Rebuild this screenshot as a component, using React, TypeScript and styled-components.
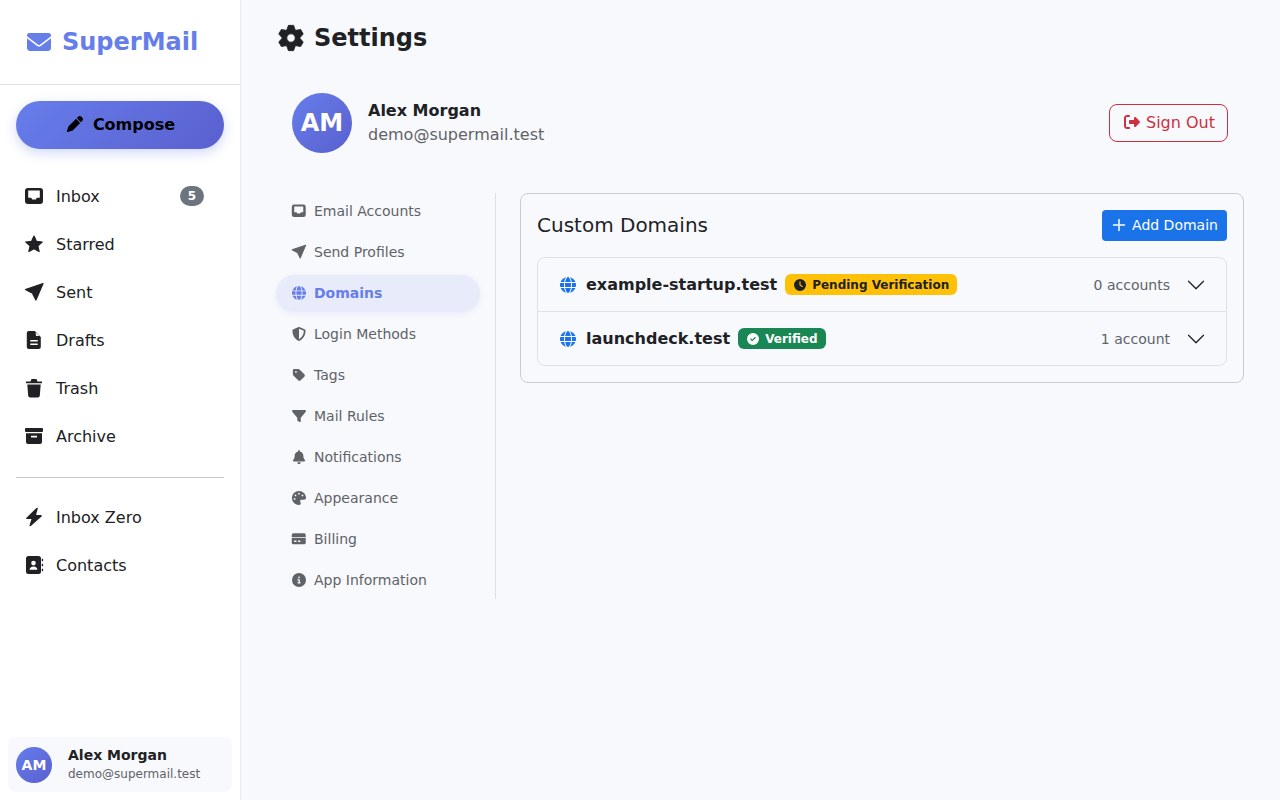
import React from "react";
import styled, { createGlobalStyle } from "styled-components";
import {
  FaEnvelope,
  FaPen,
  FaRightFromBracket,
  FaGlobe,
  FaShieldHalved,
  FaTag,
  FaFilter,
  FaBell,
  FaPalette,
  FaCircleInfo,
  FaClock,
  FaCircleCheck,
} from "react-icons/fa6";

const GlobalStyle = createGlobalStyle`
  * { box-sizing: border-box; }
  html, body { margin: 0; height: 100%; }
  body {
    font-family: "DejaVu Sans", sans-serif;
    background: #f8f9fc;
    color: #202124;
    font-size: 16px;
    overflow: hidden;
  }
`;

const Layout = styled.div`
  display: flex;
  height: 100vh;
`;

const Sidebar = styled.aside`
  width: 241px;
  flex-shrink: 0;
  background: #fff;
  border-right: 1px solid #e9ecef;
  display: flex;
  flex-direction: column;
`;

const Brand = styled.div`
  height: 85px;
  padding-left: 27px;
  border-bottom: 1px solid #e0e0e0;
  display: flex;
  align-items: center;
  gap: 11px;
  color: #667eea;
  font-size: 24px;
  font-weight: 700;
`;

const ComposeButton = styled.button`
  margin: 16px 16px 23px;
  height: 48px;
  padding: 0 0 2px 2px;
  border: none;
  border-radius: 24px;
  background: linear-gradient(135deg, #667eea, #5a5fcf);
  box-shadow: 0 4px 12px rgba(102, 126, 234, 0.3);
  color: #000;
  font-family: inherit;
  font-size: 16px;
  font-weight: 700;
  display: flex;
  align-items: center;
  justify-content: center;
  gap: 10px;
`;

const Glyph = styled.svg`
  width: 20px;
  height: 20px;
  flex-shrink: 0;
  fill: currentColor;
`;

const NavItem = styled.div`
  height: 48px;
  padding: 0 36px 0 24px;
  display: flex;
  align-items: center;
  gap: 12px;
  color: #202124;
  font-size: 16px;
`;

const NavLabel = styled.span`
  flex: 1;
`;

const CountBadge = styled.span`
  width: 24px;
  height: 20px;
  border-radius: 10px;
  background: #6c757d;
  color: #fff;
  font-size: 12px;
  font-weight: 700;
  display: flex;
  align-items: center;
  justify-content: center;
`;

const SideDivider = styled.hr`
  margin: 17px 16px 15px;
  border: none;
  border-top: 1px solid #ccc;
`;

const UserCard = styled.div`
  margin: auto 8px 8px;
  height: 55px;
  padding: 0 8px;
  border-radius: 8px;
  background: #f8f9fc;
  display: flex;
  align-items: center;
  gap: 16px;
`;

const Avatar = styled.div<{ $size: number; $font: number }>`
  width: ${(p) => p.$size}px;
  height: ${(p) => p.$size}px;
  font-size: ${(p) => p.$font}px;
  flex-shrink: 0;
  border-radius: 50%;
  background: linear-gradient(135deg, #667eea, #5a5fcf);
  color: #fff;
  font-weight: 700;
  display: flex;
  align-items: center;
  justify-content: center;
`;

const UserName = styled.div`
  font-size: 14px;
  font-weight: 700;
  line-height: 20px;
`;

const UserMail = styled.div`
  font-size: 12px;
  line-height: 19px;
  color: #5f6368;
`;

const Main = styled.main`
  flex: 1;
  min-width: 0;
  padding: 17px 36px 0 35px;
`;

const PageTitle = styled.h1`
  margin: 0 0 36px;
  padding: 2px 0 0 1px;
  height: 40px;
  font-size: 24px;
  font-weight: 700;
  display: flex;
  align-items: center;
  gap: 9px;
  ${Glyph} {
    width: 28px;
    height: 28px;
  }
`;

const ProfileRow = styled.div`
  height: 60px;
  padding: 0 16px;
  margin-bottom: 40px;
  display: flex;
  align-items: center;
  gap: 16px;
`;

const ProfileText = styled.div`
  flex: 1;
`;

const ProfileName = styled.div`
  font-weight: 700;
  line-height: 24px;
`;

const ProfileMail = styled.div`
  color: #5f6368;
  line-height: 24px;
`;

const SignOut = styled.button`
  height: 38px;
  width: 119px;
  border: 1px solid #cf3040;
  border-radius: 8px;
  background: transparent;
  color: #cf3040;
  font-family: inherit;
  font-size: 16px;
  display: flex;
  align-items: center;
  justify-content: center;
  gap: 6px;
  padding: 0 0 2px 2px;
`;

const SettingsBody = styled.div`
  display: flex;
  align-items: flex-start;
  gap: 24px;
`;

const SettingsNav = styled.nav`
  width: 220px;
  flex-shrink: 0;
  padding: 0 15px 0 0;
  border-right: 1px solid #dee2e6;
  display: flex;
  flex-direction: column;
  gap: 4px;
`;

const SettingsItem = styled.div<{ $active?: boolean }>`
  height: 37px;
  padding: 0 16px 2px;
  border-radius: 19px;
  display: flex;
  align-items: center;
  gap: 8px;
  font-size: 14px;
  font-weight: ${(p) => (p.$active ? 700 : 400)};
  color: ${(p) => (p.$active ? "#667eea" : "#5f6368")};
  background: ${(p) => (p.$active ? "#e8ebfa" : "transparent")};
  box-shadow: ${(p) => (p.$active ? "0 2px 6px rgba(102, 126, 234, 0.1)" : "none")};
  svg {
    width: 14px;
    flex-shrink: 0;
  }
  ${Glyph} {
    width: 15.5px;
    height: 15.5px;
    margin: 0 -0.75px;
  }
`;

const Card = styled.section`
  flex: 1;
  min-width: 0;
  padding: 16px;
  border: 1px solid #ccc;
  border-radius: 8px;
`;

const CardHeader = styled.div`
  height: 31px;
  margin-bottom: 16px;
  display: flex;
  align-items: center;
  justify-content: space-between;
`;

const CardTitle = styled.h2`
  margin: 0 0 2px;
  font-size: 20px;
  font-weight: 400;
`;

const AddButton = styled.button`
  width: 125px;
  height: 31px;
  border: none;
  border-radius: 4px;
  background: #1a73e8;
  color: #fff;
  font-family: inherit;
  font-size: 14px;
  padding: 0 0 2px;
  display: flex;
  align-items: center;
  justify-content: center;
  gap: 5px;
`;

const DomainList = styled.div`
  border: 1px solid #dee2e6;
  border-radius: 8px;
`;

const DomainRow = styled.div`
  height: 53px;
  padding: 0 20px 0 22px;
  display: flex;
  align-items: center;
  & + & {
    height: 54px;
    border-top: 1px solid #dee2e6;
  }
`;

const GlobeWrap = styled.span`
  display: flex;
  margin-right: 10px;
  color: #1a73e8;
  font-size: 16px;
`;

const DomainName = styled.span`
  font-weight: 700;
  margin-right: 8px;
`;

const StatusBadge = styled.span<{ $tone: "pending" | "verified" }>`
  height: 21px;
  padding: 0 8px 0 9px;
  border-radius: 6px;
  font-size: 12px;
  font-weight: 700;
  display: flex;
  align-items: center;
  gap: 6px;
  background: ${(p) => (p.$tone === "pending" ? "#ffc107" : "#198754")};
  color: ${(p) => (p.$tone === "pending" ? "#202124" : "#fff")};
`;

const AccountCount = styled.span`
  margin-left: auto;
  margin-right: 16px;
  font-size: 14px;
  color: #5f6368;
`;

const Chevron = () => (
  <svg width="20" height="20" viewBox="0 0 16 16" fill="#202124">
    <path
      fillRule="evenodd"
      d="M1.646 4.646a.5.5 0 0 1 .708 0L8 10.293l5.646-5.647a.5.5 0 0 1 .708.708l-6 6a.5.5 0 0 1-.708 0l-6-6a.5.5 0 0 1 0-.708z"
    />
  </svg>
);

const Plus = () => (
  <svg width="16" height="16" viewBox="0 0 16 16" fill="#fff" stroke="#fff" strokeWidth="0.5">
    <path
      fillRule="evenodd"
      d="M8 2a.5.5 0 0 1 .5.5v5h5a.5.5 0 0 1 0 1h-5v5a.5.5 0 0 1-1 0v-5h-5a.5.5 0 0 1 0-1h5v-5A.5.5 0 0 1 8 2z"
    />
  </svg>
);

// the glyphs below are drawn on a 20px box, the stock solid set is too sharp for them
const InboxIcon = () => (
  <Glyph viewBox="0 0 20 20">
    <path
      fillRule="evenodd"
      d="M4 2h12a3 3 0 0 1 3 3v10a3 3 0 0 1-3 3H4a3 3 0 0 1-3-3V5a3 3 0 0 1 3-3zM4.2 4.6v7.2h3l1 1.8h3.6l1-1.8h3V4.6z"
    />
  </Glyph>
);

const StarIcon = () => (
  <Glyph viewBox="0 0 20 20">
    <path
      d="M10 2l2.4 5.3 5.8.7-4.3 3.9 1.2 5.7-5.1-2.9-5.1 2.9 1.2-5.7L1.800 8l5.800-.7z"
      stroke="currentColor"
      strokeWidth="1.2"
      strokeLinejoin="round"
    />
  </Glyph>
);

const PlaneIcon = () => (
  <Glyph viewBox="0 0 20 20">
    <path
      d="M19 1.500L1.500 7.500l6 3.200 5.500-4.700-4.300 5.700 3.200 6.300z"
      stroke="currentColor"
      strokeWidth="1.3"
      strokeLinejoin="round"
    />
  </Glyph>
);

const FileIcon = () => (
  <Glyph viewBox="0 0 20 20">
    <path
      fillRule="evenodd"
      d="M4.800 1h6l6 6v10a2 2 0 0 1-2 2H4.800a2 2 0 0 1-2-2V3a2 2 0 0 1 2-2zM11.800 2.500V5a1 1 0 0 0 1 1h2.500zM6.300 10v1.600h7.400V10zM6.300 13.500v1.600h7.400v-1.600z"
    />
  </Glyph>
);

const TrashIcon = () => (
  <Glyph viewBox="0 0 20 20">
    <path d="M7.500 1h5l1 2.500H18v1.700H2V3.500h4.500z" />
    <path d="M3.300 6.500h13.400l-.9 11.200a2 2 0 0 1-2 1.800H6.200a2 2 0 0 1-2-1.800z" />
  </Glyph>
);

const ArchiveIcon = () => (
  <Glyph viewBox="0 0 20 20">
    <rect x="1" y="2" width="18" height="4" rx="1" />
    <path
      fillRule="evenodd"
      d="M2 7.300h16V16a2 2 0 0 1-2 2H4a2 2 0 0 1-2-2zM7 9.800v1.800h6V9.800z"
    />
  </Glyph>
);

const BoltIcon = () => (
  <Glyph viewBox="0 0 20 20">
    <path
      d="M13 1.500L3 11.200h5.600L6.300 18.500 17 8.800h-6z"
      stroke="currentColor"
      strokeWidth="1.6"
      strokeLinejoin="round"
    />
  </Glyph>
);

const ContactsIcon = () => (
  <Glyph viewBox="0 0 20 20">
    <path
      fillRule="evenodd"
      d="M4.500 1h10a2.500 2.500 0 0 1 2.500 2.500v13a2.500 2.500 0 0 1-2.500 2.500h-10A2.500 2.500 0 0 1 2 16.500v-13A2.500 2.500 0 0 1 4.500 1zM9.500 5.800a2.300 2.300 0 1 0 0 4.600 2.300 2.300 0 0 0 0-4.600zM5.600 14.800h7.800c0-2-1.500-3.300-3.900-3.300s-3.900 1.300-3.900 3.300z"
    />
    <rect x="17.800" y="3.800" width="1.300" height="2.400" />
    <rect x="17.800" y="8.800" width="1.300" height="2.400" />
    <rect x="17.800" y="13.800" width="1.300" height="2.400" />
  </Glyph>
);

const CardIcon = () => (
  <Glyph viewBox="0 0 20 20">
    <path
      fillRule="evenodd"
      d="M3 3h14a2 2 0 0 1 2 2v10a2 2 0 0 1-2 2H3a2 2 0 0 1-2-2V5a2 2 0 0 1 2-2zM1 7.600v1h18v-1zM4 12.300v1.800h3v-1.800zM9 12.300v1.800h3v-1.800z"
    />
  </Glyph>
);

// six toothed gear, teeth sit on top and bottom
const gearPath = () => {
  const points: string[] = [];
  for (let k = 0; k < 6; k++) {
    const mid = (Math.PI / 3) * k - Math.PI / 2;
    [
      [6.5, -0.48],
      [9.2, -0.2],
      [9.2, 0.2],
      [6.5, 0.48],
    ].forEach(([r, off]) => {
      const a = mid + off;
      points.push(`${(10 + r * Math.cos(a)).toFixed(2)} ${(10 + r * Math.sin(a)).toFixed(2)}`);
    });
  }
  return `M${points.join("L")}z`;
};

const GearIcon = () => (
  <Glyph viewBox="0 0 20 20">
    <path
      d={`${gearPath()}M10 7a3 3 0 1 0 0 6 3 3 0 0 0 0-6z`}
      fillRule="evenodd"
      stroke="currentColor"
      strokeWidth="0.6"
      strokeLinejoin="round"
    />
  </Glyph>
);

const mainNav = [
  { label: "Inbox", icon: <InboxIcon />, count: 5 },
  { label: "Starred", icon: <StarIcon /> },
  { label: "Sent", icon: <PlaneIcon /> },
  { label: "Drafts", icon: <FileIcon /> },
  { label: "Trash", icon: <TrashIcon /> },
  { label: "Archive", icon: <ArchiveIcon /> },
];

const extraNav = [
  { label: "Inbox Zero", icon: <BoltIcon /> },
  { label: "Contacts", icon: <ContactsIcon /> },
];

const settingsNav = [
  { label: "Email Accounts", icon: <InboxIcon /> },
  { label: "Send Profiles", icon: <PlaneIcon /> },
  { label: "Domains", icon: <FaGlobe />, active: true },
  { label: "Login Methods", icon: <FaShieldHalved /> },
  { label: "Tags", icon: <FaTag /> },
  { label: "Mail Rules", icon: <FaFilter /> },
  { label: "Notifications", icon: <FaBell /> },
  { label: "Appearance", icon: <FaPalette /> },
  { label: "Billing", icon: <CardIcon /> },
  { label: "App Information", icon: <FaCircleInfo /> },
];

const App = () => {
  return (
    <Layout>
      <GlobalStyle />
      <Sidebar>
        <Brand>
          <FaEnvelope />
          SuperMail
        </Brand>
        <ComposeButton>
          <FaPen />
          Compose
        </ComposeButton>
        {mainNav.map((item) => (
          <NavItem key={item.label}>
            {item.icon}
            <NavLabel>{item.label}</NavLabel>
            {item.count && <CountBadge>{item.count}</CountBadge>}
          </NavItem>
        ))}
        <SideDivider />
        {extraNav.map((item) => (
          <NavItem key={item.label}>
            {item.icon}
            <NavLabel>{item.label}</NavLabel>
          </NavItem>
        ))}
        <UserCard>
          <Avatar $size={36} $font={14}>AM</Avatar>
          <div>
            <UserName>Alex Morgan</UserName>
            <UserMail>demo@supermail.test</UserMail>
          </div>
        </UserCard>
      </Sidebar>
      <Main>
        <PageTitle>
          <GearIcon />
          Settings
        </PageTitle>
        <ProfileRow>
          <Avatar $size={60} $font={24}>AM</Avatar>
          <ProfileText>
            <ProfileName>Alex Morgan</ProfileName>
            <ProfileMail>demo@supermail.test</ProfileMail>
          </ProfileText>
          <SignOut>
            <FaRightFromBracket />
            Sign Out
          </SignOut>
        </ProfileRow>
        <SettingsBody>
          <SettingsNav>
            {settingsNav.map((item) => (
              <SettingsItem key={item.label} $active={item.active}>
                {item.icon}
                {item.label}
              </SettingsItem>
            ))}
          </SettingsNav>
          <Card>
            <CardHeader>
              <CardTitle>Custom Domains</CardTitle>
              <AddButton>
                <Plus />
                Add Domain
              </AddButton>
            </CardHeader>
            <DomainList>
              <DomainRow>
                <GlobeWrap><FaGlobe /></GlobeWrap>
                <DomainName>example-startup.test</DomainName>
                <StatusBadge $tone="pending">
                  <FaClock />
                  Pending Verification
                </StatusBadge>
                <AccountCount>0 accounts</AccountCount>
                <Chevron />
              </DomainRow>
              <DomainRow>
                <GlobeWrap><FaGlobe /></GlobeWrap>
                <DomainName>launchdeck.test</DomainName>
                <StatusBadge $tone="verified">
                  <FaCircleCheck />
                  Verified
                </StatusBadge>
                <AccountCount>1 account</AccountCount>
                <Chevron />
              </DomainRow>
            </DomainList>
          </Card>
        </SettingsBody>
      </Main>
    </Layout>
  );
};

export default App;
